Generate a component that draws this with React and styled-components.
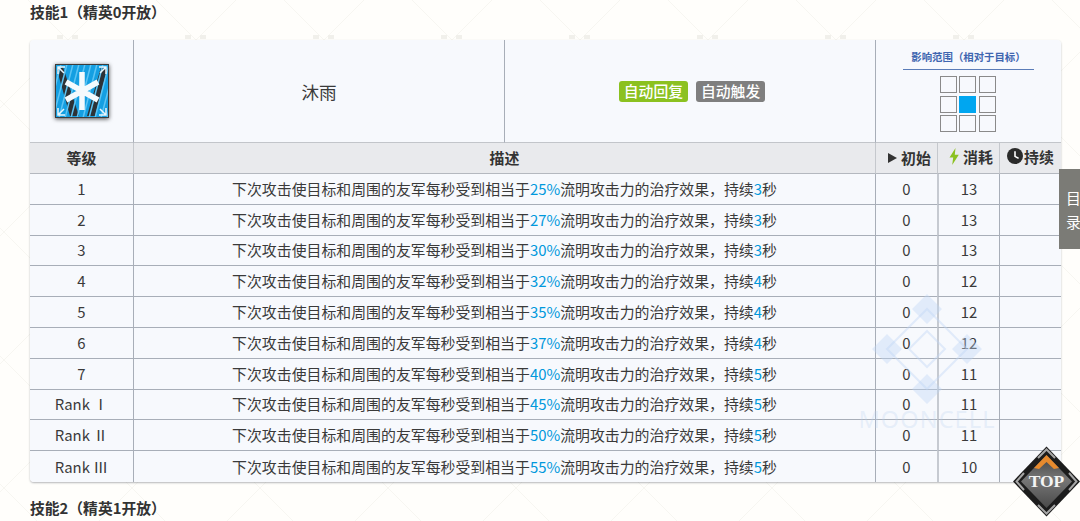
import React from 'react';
import styled, { createGlobalStyle } from 'styled-components';

const GlobalStyle = createGlobalStyle`
  html, body {
    margin: 0;
    height: 521px;
    overflow: hidden;
    background: #fffefb;
  }
  body {
    font-family: "Noto Sans CJK SC", "Noto Sans", sans-serif;
    color: #333;
  }
`;

const Page = styled.div`
  position: relative;
  width: 1080px;
  height: 521px;
  overflow: hidden;
  padding: 0 19px 0 30px;
  box-sizing: border-box;
`;

const Lattice = styled.svg`
  position: absolute;
  inset: 0;
  pointer-events: none;
`;

const Heading = styled.h4`
  position: relative;
  margin: 0;
  height: ${(p) => p.$h}px;
  padding-top: ${(p) => p.$top}px;
  box-sizing: border-box;
  font-size: 14.8px;
  line-height: 24px;
  font-weight: 700;
  color: #333;
`;

const Table = styled.table`
  position: relative;
  width: 1031px;
  table-layout: fixed;
  border-collapse: separate;
  border-spacing: 0;
  background: rgba(246, 249, 253, 0.92);
  border-radius: 4px;
  box-shadow: 0 1px 2px rgba(90, 95, 105, 0.45);
  font-size: 14.9px;
  color: #3a3a3a;
  overflow: hidden;

  td, th {
    padding: 0;
    text-align: center;
    border-left: 1px solid #a8aeb8;
    border-bottom: 1px solid #a8aeb8;
    box-sizing: border-box;
  }
  td:first-child, th:first-child {
    border-left: 0;
  }
  tr:last-child td {
    border-bottom: 0;
  }
`;

const TopRow = styled.tr`
  height: 103px;
  td {
    border-bottom: 1px solid #c2c5ca;
  }
`;

const HeadRow = styled.tr`
  height: 31px;
  th {
    padding-bottom: 2px;
    background: #e9eaed;
    font-size: 14.9px;
    font-weight: 700;
    color: #333;
    border-left-color: #c5c8cd;
    border-bottom-color: #b4b8bf;
  }
`;

const DataRow = styled.tr`
  height: 30.8px;
  td {
    line-height: 20px;
  }
  td:nth-child(4) {
    border-left: 2px solid #c6cad1;
  }
`;

const IconCell = styled.td`
  line-height: 0;
`;

const SkillIcon = styled.svg`
  width: 54px;
  height: 54px;
  filter: drop-shadow(0 1px 2px rgba(0, 0, 0, 0.7));
`;

const SkillName = styled.td`
  font-size: 17.6px;
`;

const TagCell = styled.td`
  padding-left: 4px !important;
`;

const Tag = styled.span`
  display: inline-block;
  height: 21px;
  line-height: 20px;
  padding: 0 5px;
  margin: 0 4px;
  border-radius: 3px;
  font-size: 14.8px;
  font-weight: 500;
  color: #fff;
  background: ${(p) => p.$color};
`;

const RangeTitle = styled.div`
  width: 131px;
  margin: 0 auto 6px;
  padding-bottom: 5px;
  border-bottom: 1.5px solid #5a7cb8;
  font-size: 10.4px;
  line-height: 14px;
  font-weight: 700;
  color: #3f66b0;
`;

const RangeGrid = styled.div`
  display: grid;
  grid-template-columns: repeat(3, 17px);
  grid-auto-rows: 17px;
  gap: 2.5px;
  justify-content: center;
  margin-left: -2px;
`;

const RangeCell = styled.span`
  box-sizing: border-box;
  background: ${(p) => (p.$on ? '#00a6f0' : 'transparent')};
  border: ${(p) => (p.$on ? '0' : '1.5px solid #8a8a8a')};
`;

const ThInner = styled.span`
  display: inline-flex;
  align-items: center;
  gap: ${(p) => p.$gap}px;
  margin-left: ${(p) => p.$shift}px;
  svg {
    display: block;
  }
`;

const Level = styled.td`
  font-size: 14.9px;
`;

const Hl = styled.span`
  color: #0098dc;
`;

const Watermark = styled.div`
  position: absolute;
  left: 851px;
  top: 293px;
  width: 152px;
  pointer-events: none;
  text-align: center;
  font-family: "Noto Sans", sans-serif;
  font-size: 23.5px;
  line-height: 26px;
  letter-spacing: 1.1px;
  color: rgba(190, 210, 240, 0.3);
  svg {
    display: block;
    margin: 0 auto 1px;
  }
`;

const SideTab = styled.div`
  position: absolute;
  left: 1059px;
  top: 169px;
  width: 21px;
  height: 80px;
  overflow: hidden;
  box-sizing: border-box;
  padding: 17px 0 0 7px;
  background: #7b7b76;
  color: #fff;
  font-size: 14.8px;
  line-height: 24px;
`;

const TopButton = styled.svg`
  position: absolute;
  left: 1013px;
  top: 446px;
  width: 67px;
  height: 71px;
  text {
    font-family: "Liberation Serif", serif;
    font-weight: 700;
    font-size: 17.5px;
    fill: #f4f4f4;
  }
`;

const levels = [
  ['1', 25, 3, 13], ['2', 27, 3, 13], ['3', 30, 3, 13], ['4', 32, 4, 12], ['5', 35, 4, 12],
  ['6', 37, 4, 12], ['7', 40, 5, 11], ['Rank Ⅰ', 45, 5, 11], ['Rank Ⅱ', 50, 5, 11], ['Rank Ⅲ', 55, 5, 10],
];

const rainLines = Array.from({ length: 16 }, (_, i) => i * 6 - 14);

// 45 degree rhombus lattice behind the page, 128px period
const Background = () => (
  <Lattice width="1080" height="521" viewBox="0 0 1080 521">
    <g stroke="#f7f6f1" strokeWidth="1" fill="none">
      {Array.from({ length: 14 }, (_, i) => (
        <g key={i}>
          <path d={`M${108 + i * 128} 0 L${108 + i * 128 - 521} 521`} />
          <path d={`M${28 - 512 + i * 128} 0 L${28 - 512 + i * 128 + 521} 521`} />
        </g>
      ))}
    </g>
    <g fill="#f1f0eb">
      {Array.from({ length: 9 }, (_, i) => (
        <g key={i}>
          <rect x={57 + i * 128} y="35" width="6" height="4" />
          <rect x={72 + i * 128} y="35" width="6" height="4" />
        </g>
      ))}
    </g>
  </Lattice>
);

const SkillGlyph = () => (
  <SkillIcon viewBox="0 0 54 54">
    <rect width="54" height="54" fill="#149fe2" />
    <path d="M2 6 L8 3 L24 52 L15 52 Z M52 6 L46 3 L32 52 L40 52 Z" fill="#2c3236" />
    <g stroke="#5cc4f4" strokeWidth="1.5">
      {rainLines.map((x) => (
        <path key={x} d={`M${x + 14} 0 L${x} 54`} />
      ))}
    </g>
    <g stroke="#f4fafd" strokeWidth="5.5">
      <path d="M27 8 V46 M11 18 L43 36 M43 18 L11 36" />
    </g>
    <g stroke="#eaf6fb" strokeWidth="1.5" fill="none">
      <path d="M3 10 V3 H10 M3 3 L9 9 M51 10 V3 H44 M51 3 L45 9 M3 44 V51 H10 M3 51 L9 45 M51 44 V51 H44 M51 51 L45 45" />
    </g>
    <rect x="0.5" y="0.5" width="53" height="53" fill="none" stroke="#3c3c3c" />
  </SkillIcon>
);

const App = () => (
  <>
    <GlobalStyle />
    <Page>
      <Background />
      <Heading $h={40} $top={0}>技能1（精英0开放）</Heading>
      <Table>
        <colgroup>
          <col width="103" />
          <col width="371" />
          <col width="371" />
          <col width="62" />
          <col width="62" />
          <col width="62" />
        </colgroup>
        <tbody>
          <TopRow>
            <IconCell><SkillGlyph /></IconCell>
            <SkillName>沐雨</SkillName>
            <TagCell>
              <Tag $color="#8bc120">自动回复</Tag>
              <Tag $color="#7f7f7f">自动触发</Tag>
            </TagCell>
            <td colSpan={3}>
              <RangeTitle>影响范围（相对于目标）</RangeTitle>
              <RangeGrid>
                {Array.from({ length: 9 }, (_, i) => (
                  <RangeCell key={i} $on={i === 4} />
                ))}
              </RangeGrid>
            </td>
          </TopRow>
          <HeadRow>
            <th>等级</th>
            <th colSpan={2}>描述</th>
            <th>
              <ThInner $gap={4} $shift={6}>
                <svg width="9" height="10" viewBox="0 0 9 10"><path d="M0 0 L9 5 L0 10 Z" fill="#333" /></svg>
                初始
              </ThInner>
            </th>
            <th>
              <ThInner $gap={4} $shift={5}>
                <svg width="10" height="17" viewBox="0 0 10 17"><path d="M6.5 0 L0.5 9.5 H4.2 L3.2 17 L9.8 6.8 H5.8 Z" fill="#8bc120" /></svg>
                消耗
              </ThInner>
            </th>
            <th>
              <ThInner $gap={1} $shift={0}>
                <svg width="16" height="16" viewBox="0 0 16 16">
                  <circle cx="8" cy="8" r="8" fill="#2b2b2b" />
                  <path d="M8 3.2 V8.4 L11.6 10.4" fill="none" stroke="#fff" strokeWidth="1.6" />
                </svg>
                持续
              </ThInner>
            </th>
          </HeadRow>
          {levels.map(([name, pct, sec, cost]) => (
            <DataRow key={name}>
              <Level>{name}</Level>
              <td colSpan={2}>
                下次攻击使目标和周围的友军每秒受到相当于<Hl>{pct}%</Hl>流明攻击力的治疗效果，持续<Hl>{sec}</Hl>秒
              </td>
              <td>0</td>
              <td>{cost}</td>
              <td />
            </DataRow>
          ))}
        </tbody>
      </Table>
      <Heading $h={39} $top={14}>技能2（精英1开放）</Heading>
      <Watermark>
        <svg width="112" height="112" viewBox="0 0 112 112">
          <path d="M56 1 L71 16 L56 31 L41 16 Z M16 41 L31 56 L16 71 L1 56 Z M96 41 L111 56 L96 71 L81 56 Z M56 81 L71 96 L56 111 L41 96 Z" fill="rgba(190,212,245,0.38)" />
          <g fill="none" stroke="rgba(190,212,245,0.4)" strokeWidth="2">
            <path d="M56 38 L74 56 L56 74 L38 56 Z" />
            <path d="M36 36 L56 16 L96 56 L56 96 L16 56 L36 36" />
          </g>
        </svg>
        MOONCELL
      </Watermark>
      <SideTab>目<br />录</SideTab>
      <TopButton viewBox="0 0 67 71">
        <defs>
          <linearGradient id="topFace" x1="0" y1="0" x2="0" y2="1">
            <stop offset="0" stopColor="#3f3f3f" />
            <stop offset="0.45" stopColor="#777" />
            <stop offset="1" stopColor="#4a4a4a" />
          </linearGradient>
        </defs>
        <path d="M33.5 0.5 L67 35.5 L33.5 70.5 L0 35.5 Z" fill="#1c1c1c" />
        <path d="M33.5 9 L59 35.5 L33.5 62 L8 35.5 Z" fill="url(#topFace)" />
        <g fill="none" stroke="#a6a6a6" strokeWidth="2">
          <path d="M25 12 L33.5 3.5 L42 12" />
          <path d="M25 59 L33.5 67.5 L42 59" />
          <path d="M11 27 L3.5 35.5 L11 44" />
          <path d="M56 27 L63.5 35.5 L56 44" />
        </g>
        <path d="M21 22 L33.5 9 L46 22 L41 23 L33.5 16 L26 23 Z" fill="#e68a2e" />
        <text x="33.5" y="41" textAnchor="middle">TOP</text>
      </TopButton>
    </Page>
  </>
);

export default App;
